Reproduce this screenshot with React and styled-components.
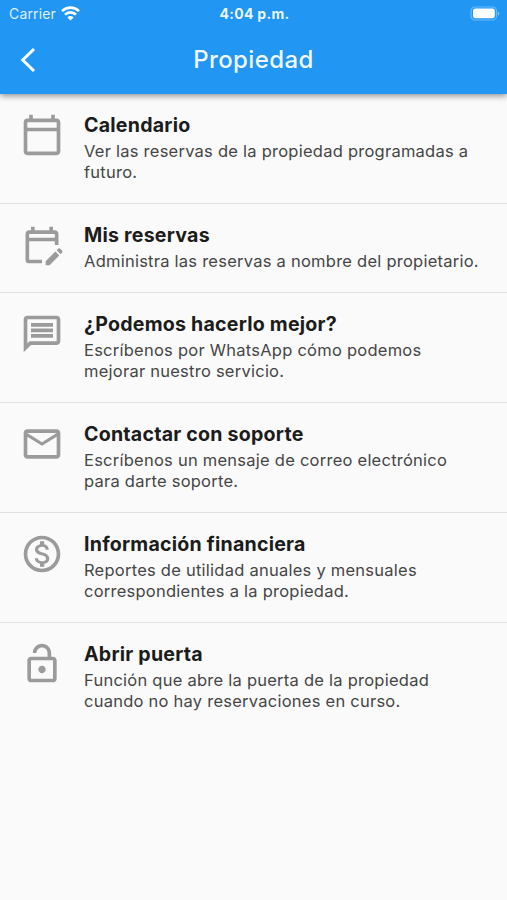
import React from "react";
import styled, { createGlobalStyle } from "styled-components";
import {
  MdOutlineCalendarToday,
  MdOutlineEditCalendar,
  MdOutlineMessage,
  MdOutlineMail,
  MdOutlineMonetizationOn,
  MdOutlineLockOpen,
} from "react-icons/md";

const GlobalStyle = createGlobalStyle`
  * { box-sizing: border-box; }
  body {
    margin: 0;
    background: #fafafa;
    font-family: Inter, "Liberation Sans", sans-serif;
  }
`;

const Screen = styled.div`
  display: flex;
  flex-direction: column;
  width: 507px;
  height: 900px;
  overflow: hidden;
  background: #fafafa;
`;

const Header = styled.header`
  flex: none;
  height: 94px;
  background: #2196f3;
  color: #fff;
  box-shadow: 0 2px 6px rgba(0, 0, 0, 0.42);
`;

const StatusBar = styled.div`
  display: grid;
  grid-template-columns: 1fr auto 1fr;
  align-items: center;
  height: 27px;
  padding: 0 7px 0 9px;
`;

const Carrier = styled.div`
  display: flex;
  align-items: center;
  gap: 5px;
  font-size: 14px;
  letter-spacing: 0.15px;
  color: rgba(255, 255, 255, 0.88);
`;

const Clock = styled.div`
  font-size: 14px;
  font-weight: 700;
  letter-spacing: 0.3px;
  color: rgba(255, 255, 255, 0.92);
`;

const Battery = styled.svg`
  justify-self: end;
`;

const NavBar = styled.div`
  display: grid;
  grid-template-columns: 60px 1fr 60px;
  align-items: center;
  height: 66px;
`;

const BackButton = styled.button`
  display: flex;
  padding: 0 0 0 20px;
  border: 0;
  background: none;
  color: inherit;
`;

const PageTitle = styled.h1`
  margin: 0;
  text-align: center;
  font-size: 24px;
  line-height: 30px;
  font-weight: 450;
  letter-spacing: 0.4px;
  color: rgba(255, 255, 255, 0.95);
`;

const Menu = styled.ul`
  margin: 0;
  padding: 0;
  list-style: none;
`;

const MenuItem = styled.li`
  display: flex;
  gap: 20px;
  height: ${(p) => p.$height}px;
  padding: 19px 0 0 20px;
  border-bottom: ${(p) => (p.$last ? "none" : "1.5px solid #e0e0e0")};
`;

const IconSlot = styled.span`
  flex: none;
  height: 44px;
  color: #9b9b9b;
  svg { display: block; }
`;

const ItemTitle = styled.h2`
  margin: 0 0 4px;
  font-size: 19.6px;
  line-height: 24px;
  font-weight: 680;
  letter-spacing: 0.22px;
  color: #1c1c1c;
  white-space: nowrap;
`;

const Description = styled.p`
  margin: 0;
  font-size: 16.5px;
  line-height: 20.6px;
  letter-spacing: 0.245px;
  color: #464646;
  white-space: pre-line;
`;

const items = [
  { icon: MdOutlineCalendarToday, title: "Calendario", text: "Ver las reservas de la propiedad programadas a\nfuturo.", height: 110 },
  { icon: MdOutlineEditCalendar, title: "Mis reservas", text: "Administra las reservas a nombre del propietario.", height: 89 },
  { icon: MdOutlineMessage, title: "¿Podemos hacerlo mejor?", text: "Escríbenos por WhatsApp cómo podemos\nmejorar nuestro servicio.", height: 110 },
  { icon: MdOutlineMail, title: "Contactar con soporte", text: "Escríbenos un mensaje de correo electrónico\npara darte soporte.", height: 110 },
  { icon: MdOutlineMonetizationOn, title: "Información financiera", text: "Reportes de utilidad anuales y mensuales\ncorrespondientes a la propiedad.", height: 110 },
  { icon: MdOutlineLockOpen, title: "Abrir puerta", text: "Función que abre la puerta de la propiedad\ncuando no hay reservaciones en curso.", height: 110 },
];

function WifiIcon() {
  return (
    <svg width="19" height="15" viewBox="0 0 19 15" fill="none" stroke="#fff" strokeWidth="2.7">
      <path d="M1 5.1a12.2 12.2 0 0 1 17 0" />
      <path d="M4 8.6a7.8 7.8 0 0 1 11 0" />
      <path d="M6.4 11.4a4.4 4.4 0 0 1 6.2 0L9.5 14.6z" fill="#fff" stroke="none" />
    </svg>
  );
}

export default function App() {
  return (
    <Screen>
      <GlobalStyle />
      <Header>
        <StatusBar>
          <Carrier>
            Carrier
            <WifiIcon />
          </Carrier>
          <Clock>4:04 p.m.</Clock>
          <Battery width="30" height="15" viewBox="0 0 30 15">
            <rect x="1" y="1" width="25.500" height="13" rx="4" fill="none" stroke="#fff" strokeOpacity="0.35" strokeWidth="1.2" />
            <rect x="3" y="2.600" width="21.800" height="9.700" rx="2.3" fill="#fff" />
            <path d="M27.800 5.400c2 .9 2 3.300 0 4.200z" fill="#fff" fillOpacity="0.45" />
          </Battery>
        </StatusBar>
        <NavBar>
          <BackButton aria-label="Atrás">
            <svg width="16" height="26" viewBox="0 0 16 26" fill="none" stroke="#fff" strokeWidth="3">
              <path d="M14 2L2.800 13L14 24" />
            </svg>
          </BackButton>
          <PageTitle>Propiedad</PageTitle>
        </NavBar>
      </Header>
      <Menu>
        {items.map(({ icon: Icon, title, text, height }, i) => (
          <MenuItem key={title} $height={height} $last={i === items.length - 1}>
            <IconSlot>
              <Icon size={44} />
            </IconSlot>
            <div>
              <ItemTitle>{title}</ItemTitle>
              <Description>{text}</Description>
            </div>
          </MenuItem>
        ))}
      </Menu>
    </Screen>
  );
}
